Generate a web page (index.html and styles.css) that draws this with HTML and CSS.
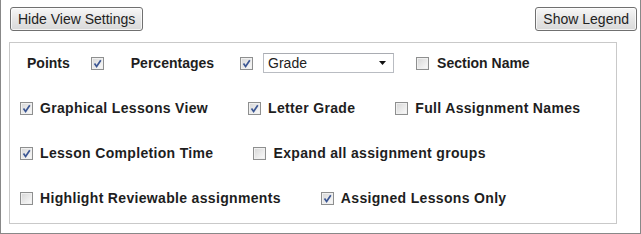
FILE: index.html
```html
<!DOCTYPE html>
<html lang="en">

<head>
    <meta charset="UTF-8">
    <title>View Settings</title>
    <link rel="stylesheet" href="styles.css">
</head>

<body>
    <div class="panel">
        <div class="toolbar">
            <button class="btn">Hide View Settings</button>
            <button class="btn">Show Legend</button>
        </div>

        <div class="settings">
            <div class="row row-first">
                <span class="lbl lbl-points">Points</span>
                <span class="cb checked cb-points"><svg viewBox="0 0 11 11"><path d="M2.5 5.5 L4.6 8.4 L8.8 2.2"/></svg></span>
                <span class="lbl lbl-perc">Percentages</span>
                <span class="cb checked cb-perc"><svg viewBox="0 0 11 11"><path d="M2.5 5.5 L4.6 8.4 L8.8 2.2"/></svg></span>
                <div class="select">
                    <span>Grade</span>
                    <svg class="arrow" viewBox="0 0 7 4"><path d="M0 0 H7 L3.5 4 Z"/></svg>
                </div>
                <label class="item">
                    <span class="cb"></span>
                    <span class="lbl">Section Name</span>
                </label>
            </div>

            <div class="row">
                <label class="item">
                    <span class="cb checked"><svg viewBox="0 0 11 11"><path d="M2.5 5.5 L4.6 8.4 L8.8 2.2"/></svg></span>
                    <span class="lbl">Graphical Lessons View</span>
                </label>
                <label class="item">
                    <span class="cb checked"><svg viewBox="0 0 11 11"><path d="M2.5 5.5 L4.6 8.4 L8.8 2.2"/></svg></span>
                    <span class="lbl">Letter Grade</span>
                </label>
                <label class="item">
                    <span class="cb"></span>
                    <span class="lbl">Full Assignment Names</span>
                </label>
            </div>

            <div class="row">
                <label class="item">
                    <span class="cb checked"><svg viewBox="0 0 11 11"><path d="M2.5 5.5 L4.6 8.4 L8.8 2.2"/></svg></span>
                    <span class="lbl">Lesson Completion Time</span>
                </label>
                <label class="item">
                    <span class="cb"></span>
                    <span class="lbl">Expand all assignment groups</span>
                </label>
            </div>

            <div class="row">
                <label class="item">
                    <span class="cb"></span>
                    <span class="lbl">Highlight Reviewable assignments</span>
                </label>
                <label class="item">
                    <span class="cb checked"><svg viewBox="0 0 11 11"><path d="M2.5 5.5 L4.6 8.4 L8.8 2.2"/></svg></span>
                    <span class="lbl">Assigned Lessons Only</span>
                </label>
            </div>
        </div>
    </div>
</body>

</html>
```

FILE: styles.css
```css
* {
    margin: 0;
    padding: 0;
    box-sizing: border-box;
}

body {
    font-family: 'Liberation Sans', Arial, sans-serif;
    font-size: 14px;
    color: #1e1e1e;
    background: #fff;
}

.panel {
    width: 641px;
    height: 234px;
    border: 1px solid #888;
    border-top: none;
}

.toolbar {
    display: flex;
    justify-content: space-between;
    padding: 7px 3px 0 9px;
}

.btn {
    height: 24px;
    padding: 0 7px;
    font-family: inherit;
    font-size: 14px;
    color: #222;
    background: linear-gradient(#f7f7f7, #e6e6e6 50%, #d9d9d9);
    border: 1px solid #707070;
    border-radius: 3px;
    box-shadow: inset 0 0 0 1px rgba(255, 255, 255, 0.7);
}

.settings {
    width: 608px;
    height: 182px;
    margin: 11px 0 0 8px;
    border: 1px solid #c9c9c9;
    padding: 8px 10px 0;
    display: flex;
    flex-direction: column;
    gap: 21px;
}

.row {
    height: 24px;
    display: flex;
    align-items: center;
}

.row-first {
    padding-left: 7px;
}

.lbl {
    font-weight: 700;
    white-space: nowrap;
}

.item {
    display: flex;
    align-items: center;
    gap: 7px;
    margin-right: 40px;
}

.item .lbl {
    letter-spacing: 0.33px;
}

.row-first .item .lbl {
    letter-spacing: 0;
}

.cb {
    width: 13px;
    height: 13px;
    flex: none;
    border: 1px solid #8e8f8f;
    background: linear-gradient(135deg, #d6d6d6, #f4f4f4 80%, #fcfcfc);
    box-shadow: inset 0 0 0 1px #f0f0f0;
    display: flex;
    align-items: center;
    justify-content: center;
}

.cb svg {
    width: 11px;
    height: 11px;
}

.cb svg path {
    fill: none;
    stroke: #3b5693;
    stroke-width: 1.7;
}

.lbl-points {
    margin-right: 21px;
}

.cb-points {
    margin-right: 27px;
}

.lbl-perc {
    margin-right: 26px;
}

.cb-perc {
    margin-right: 10px;
}

.select {
    width: 131px;
    height: 20px;
    margin-right: 22px;
    padding: 0 7px 0 4px;
    border: 1px solid #b9bcc2;
    border-top-color: #a9acb2;
    background: #fff;
    display: flex;
    align-items: center;
    justify-content: space-between;
    color: #222;
}

.select .arrow {
    width: 7px;
    height: 4px;
}

.select .arrow path {
    fill: #111;
}

.row-first .item {
    gap: 8px;
}
```
